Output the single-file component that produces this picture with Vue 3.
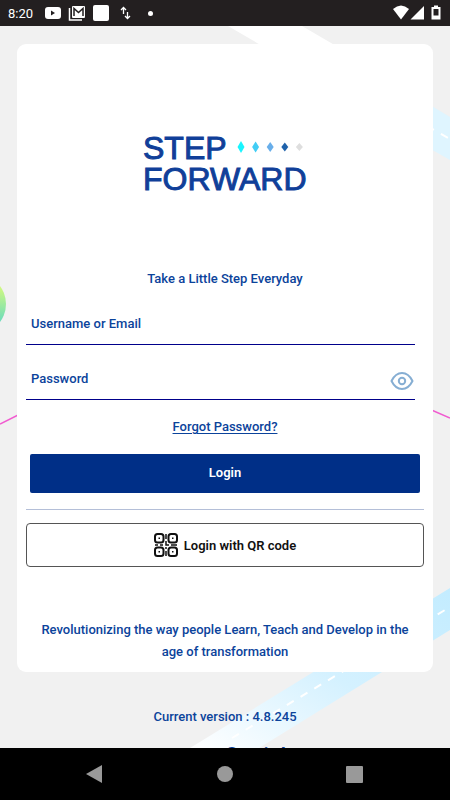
<template>
  <div class="screen">
    <header class="status-bar">
      <span class="clock">8:20</span>
      <svg class="status-icon" width="18" height="18" viewBox="0 0 18 18">
        <rect x="1" y="3" width="16" height="12" rx="3" fill="#fff" />
        <path d="M7 6.5v5l4-2.5z" fill="#231f20" />
      </svg>
      <svg class="status-icon" width="18" height="18" viewBox="0 0 18 18">
        <path d="M1.5 4v12H14" fill="none" stroke="#fff" stroke-width="1.5" />
        <rect x="4" y="2" width="13" height="12" rx="1" fill="#fff" />
        <path
          d="M6 12V4.5l4.5 4l4.5-4V12"
          fill="none"
          stroke="#231f20"
          stroke-width="1.5"
        />
      </svg>
      <svg class="status-icon" width="18" height="18" viewBox="0 0 18 18">
        <rect x="1" y="1" width="16" height="16" rx="2" fill="#fff" />
      </svg>
      <svg class="status-icon" width="18" height="18" viewBox="0 0 18 18">
        <path
          d="M7.5 10V3.5M5 6l2.5-2.5L10 6M11.5 8v6.5M9 12l2.5 2.5L14 12"
          fill="none"
          stroke="#fff"
          stroke-width="1.3"
        />
      </svg>
      <span class="dot"></span>
      <svg class="signals" width="50" height="18" viewBox="0 0 50 18">
        <path d="M1 5Q9 -2 17 5L9 15.5z" fill="#fff" />
        <path d="M18.5 15.5H32V2z" fill="#fff" />
        <path d="M40 3h2V1.5h4V3h2.5v12.5H39.5V3z" fill="#fff" />
        <path d="M41.5 5h5v6.500h-5z" fill="#231f20" />
      </svg>
    </header>

    <main class="content">
      <svg
        class="backdrop"
        viewBox="0 0 450 722"
        preserveAspectRatio="xMidYMin slice"
        aria-hidden="true"
      >
        <defs>
          <linearGradient id="road" x1="0" y1="1" x2="1" y2="0">
            <stop offset="0" stop-color="#fff" />
            <stop offset="0.5" stop-color="#d4f1ff" />
            <stop offset="1" stop-color="#c3ecff" />
          </linearGradient>
          <linearGradient id="ball" x1="0" y1="0" x2="0" y2="1">
            <stop offset="0.2" stop-color="#d3f97f" />
            <stop offset="0.8" stop-color="#6bdcbc" />
          </linearGradient>
        </defs>
        <path d="M228 0H302L420 69V112z" fill="#fff" />
        <path d="M420 73L450 91V134L420 117z" fill="#dff5ff" />
        <path
          d="M427 100L450 113"
          stroke="#fff"
          stroke-width="2"
          stroke-dasharray="8 8"
        />
        <circle cx="-24" cy="278" r="30" fill="url(#ball)" />
        <path
          d="M0 398L30 383M420 379L450 392"
          fill="none"
          stroke="#f15bd0"
          stroke-width="1.5"
        />
        <path d="M190 722L450 562V604L259 722z" fill="url(#road)" />
        <path
          d="M232 712L450 581"
          stroke="#fff"
          stroke-width="2"
          stroke-dasharray="8 8"
        />
      </svg>

      <section class="card">
        <h1 class="logo">
          <span class="logo-row">
            STEP
            <svg width="70" height="18" viewBox="0 0 70 18">
              <path
                v-for="(color, idx) in diamonds"
                :key="color"
                :d="diamondPath(idx)"
                :fill="color"
              />
            </svg>
          </span>
          <span class="logo-row">FORWARD</span>
        </h1>
        <p class="tagline">Take a Little Step Everyday</p>

        <form class="login-form" @submit.prevent>
          <div class="field">
            <input
              v-model="username"
              type="text"
              placeholder="Username or Email"
              aria-label="Username or Email"
            />
          </div>
          <div class="field">
            <input
              v-model="password"
              :type="showPassword ? 'text' : 'password'"
              placeholder="Password"
              aria-label="Password"
            />
            <button
              class="toggle"
              type="button"
              aria-label="Show password"
              @click="showPassword = !showPassword"
            >
              <svg width="24" height="20" viewBox="0 0 24 20">
                <path
                  d="M1.5 10C4 5 8 2 12 2s8 3 10.5 8C20 15 16 18 12 18S4 15 1.5 10z"
                  fill="none"
                  stroke="#86aed3"
                  stroke-width="2"
                  stroke-linejoin="round"
                />
                <circle
                  cx="12"
                  cy="10"
                  r="3.2"
                  fill="none"
                  stroke="#86aed3"
                  stroke-width="2"
                />
              </svg>
            </button>
          </div>
          <a class="forgot" href="#">Forgot Password?</a>
          <button class="login" type="submit">Login</button>
        </form>

        <hr class="divider" />

        <button class="qr-login" type="button">
          <svg width="24" height="24" viewBox="0 0 24 24">
            <g fill="none" stroke="#111" stroke-width="2">
              <rect x="1" y="1" width="8.5" height="8.5" rx="2.5" />
              <rect x="14.5" y="1" width="8.5" height="8.5" rx="2.5" />
              <rect x="1" y="14.5" width="8.5" height="8.5" rx="2.5" />
              <rect x="14.5" y="14.5" width="8.5" height="8.5" rx="2.5" />
            </g>
            <path
              d="M12 1v5M12 8v4h3M1 12h3M6 12h3M17 12h6M12 14v2M12 18v5"
              fill="none"
              stroke="#111"
              stroke-width="1.5"
            />
            <path
              d="M4.5 4.5H6V6H4.5zM18 4.5h1.5V6H18zM4.5 18H6v1.5H4.5zM18 18h1.5v1.5H18z"
              fill="#111"
            />
          </svg>
          Login with QR code
        </button>

        <p class="mission">
          Revolutionizing the way people Learn, Teach and Develop in the age of
          transformation
        </p>
      </section>

      <p class="version">Current version : 4.8.245</p>
      <p class="brand">Conicle</p>
    </main>

    <nav class="nav-bar">
      <button type="button" aria-label="Back">
        <svg width="18" height="18" viewBox="0 0 18 18">
          <path d="M0 9L16 0V18z" fill="#999" />
        </svg>
      </button>
      <button type="button" aria-label="Home">
        <svg width="18" height="18" viewBox="0 0 18 18">
          <circle cx="9" cy="9" r="8" fill="#999" />
        </svg>
      </button>
      <button type="button" aria-label="Recent apps">
        <svg width="18" height="18" viewBox="0 0 18 18">
          <rect x="0" y="1" width="17" height="17" rx="1" fill="#999" />
        </svg>
      </button>
    </nav>
  </div>
</template>

<script setup>
import { ref } from 'vue';

const username = ref('');
const password = ref('');
const showPassword = ref(false);

const diamonds = ['#19f5ff', '#42cdf5', '#68aeea', '#1f62ab', '#dedede'];

const diamondPath = (idx) => {
  const x = 4 + idx * 14.6;
  const h = 6 - idx / 2;
  return `M${x} ${7 - h}L${x + 3.5} 7L${x} ${7 + h}L${x - 3.5} 7z`;
};
</script>

<style>
body {
  margin: 0;
}
</style>

<style scoped>
.screen {
  display: flex;
  flex-direction: column;
  height: 100vh;
  background: #f1f1f1;
  color: #0b439b;
  font-family: Roboto, sans-serif;
  font-size: 13px;
  font-weight: 500;
}

button {
  padding: 0;
  border: 0;
  background: none;
  font: inherit;
  cursor: pointer;
}

p {
  margin: 0;
}

.status-bar {
  display: flex;
  align-items: center;
  flex-shrink: 0;
  gap: 6px;
  box-sizing: border-box;
  height: 26px;
  padding: 0 8px;
  background: #231f20;
  color: #fff;
}

.clock {
  width: 30px;
  font-weight: 400;
}

.dot {
  width: 5px;
  height: 5px;
  margin-left: 8px;
  border-radius: 50%;
  background: #fff;
}

.signals {
  margin-left: auto;
}

.content {
  position: relative;
  flex: 1;
  min-height: 0;
  overflow: hidden;
  padding: 18px 17px 0;
  text-align: center;
}

.backdrop {
  position: absolute;
  inset: 0;
  width: 100%;
  height: 100%;
}

.card {
  position: relative;
  padding: 89px 9px 9px;
  border-radius: 9px;
  background: #fff;
}

.logo {
  display: flex;
  flex-direction: column;
  width: 164px;
  margin: 0 auto;
  color: #103f99;
  font-family: 'Liberation Sans', sans-serif;
  font-size: 32px;
  font-weight: 400;
  line-height: 31px;
  text-align: left;
  -webkit-text-stroke: 1px #103f99;
}

.logo-row {
  display: flex;
  align-items: center;
  justify-content: space-between;
}

.tagline {
  padding-top: 73px;
  line-height: 22px;
}

.login-form {
  display: flex;
  flex-direction: column;
  align-items: center;
}

.field {
  display: flex;
  align-items: center;
  align-self: stretch;
  box-sizing: border-box;
  height: 55px;
  margin-right: 9px;
  padding: 12px 1px 0 5px;
  border-bottom: 1px solid #00008b;
}

.field input {
  flex: 1;
  min-width: 0;
  padding: 0;
  border: 0;
  outline: 0;
  background: none;
  color: inherit;
  font: inherit;
}

.field input::placeholder {
  color: inherit;
  opacity: 1;
}

.toggle {
  display: flex;
  margin-top: 6px;
}

.forgot {
  margin-top: 16px;
  color: inherit;
  line-height: 22px;
  text-underline-offset: 2px;
}

.login {
  align-self: stretch;
  height: 39px;
  margin: 16px 4px 0;
  padding-bottom: 2px;
  border-radius: 2px;
  background: #002f87;
  color: #fff;
  font-weight: 600;
}

.divider {
  height: 1px;
  margin: 16px 0 13px;
  border: 0;
  background: #b4bfd8;
}

.qr-login {
  display: flex;
  align-items: center;
  justify-content: center;
  gap: 6px;
  width: 100%;
  height: 44px;
  border: 1px solid #555;
  border-radius: 4px;
  color: #111;
  font-weight: 600;
}

.mission {
  padding: 52px 10px 0;
  line-height: 22px;
}

.version {
  position: relative;
  padding-top: 34px;
  line-height: 22px;
}

.brand {
  position: relative;
  padding: 9px 0 0 72px;
  font-size: 22px;
  font-weight: 500;
  line-height: 38px;
}

.nav-bar {
  display: flex;
  align-items: center;
  justify-content: center;
  flex-shrink: 0;
  gap: 112px;
  height: 52px;
  background: #000;
}

.nav-bar button {
  display: flex;
}
</style>
